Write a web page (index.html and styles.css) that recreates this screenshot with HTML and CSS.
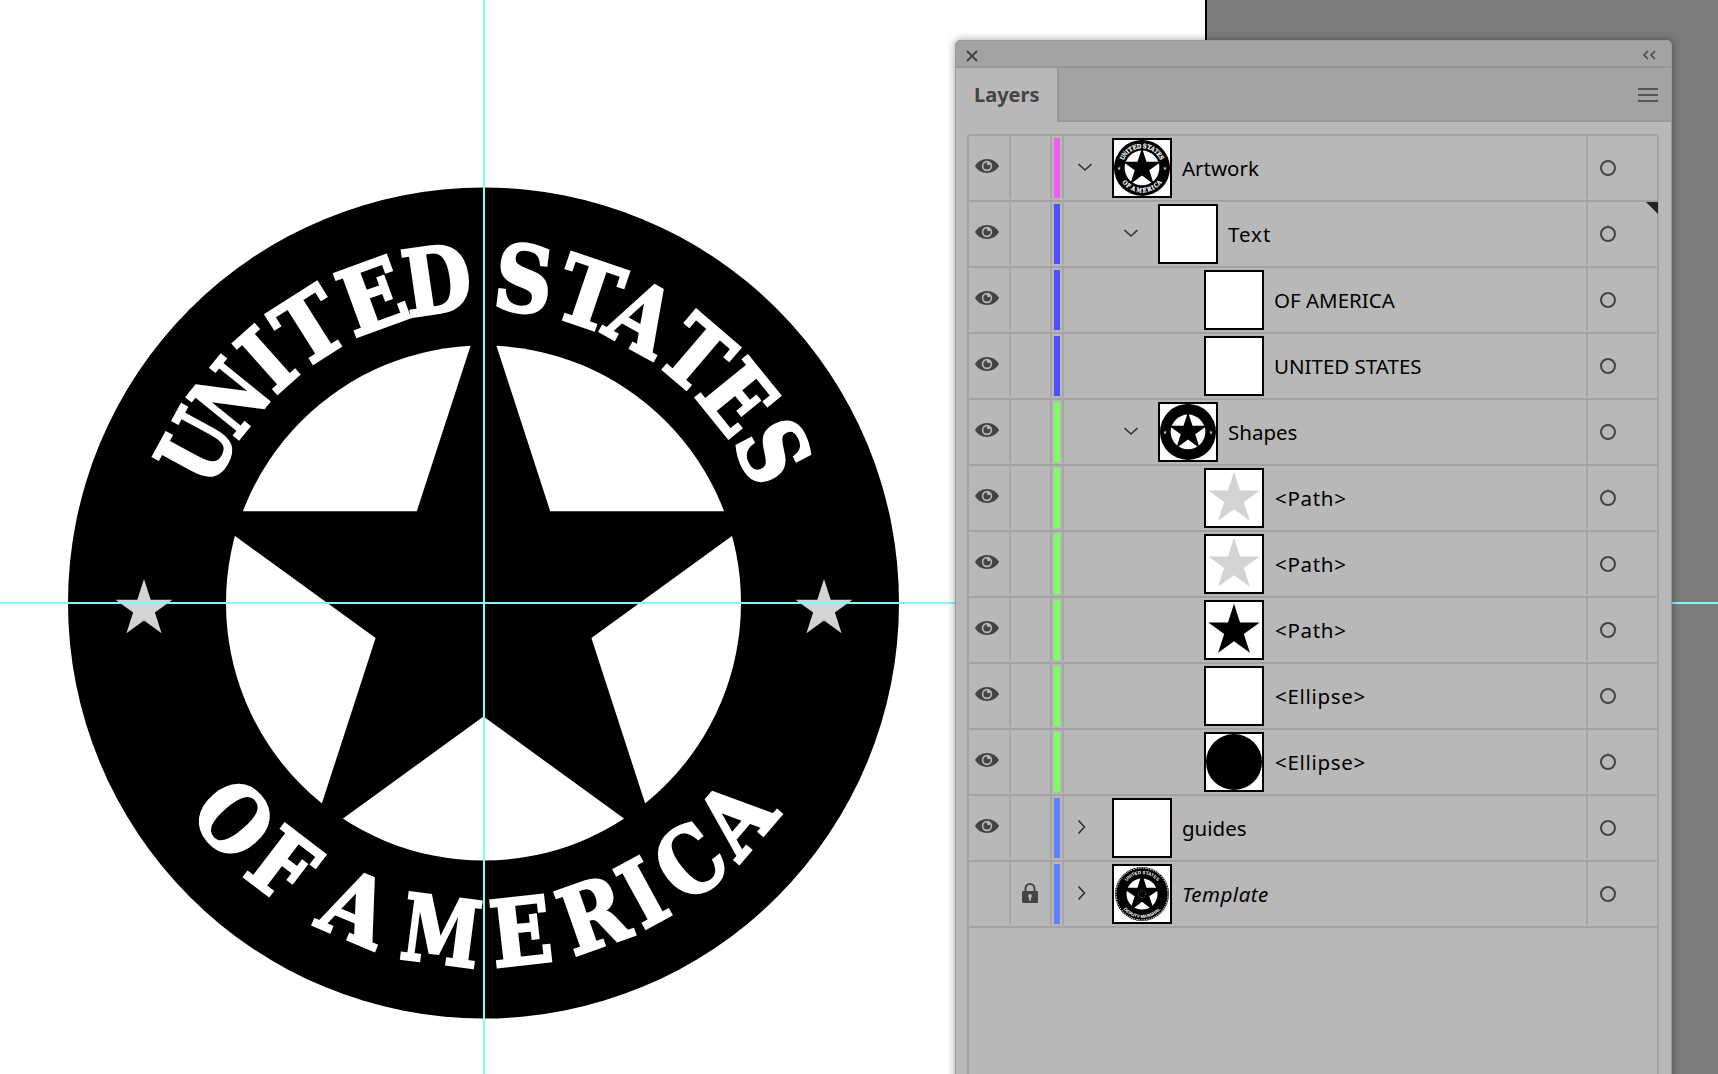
FILE: index.html
```html
<!DOCTYPE html>
<html lang="en">
<head>
<meta charset="utf-8">
<title>Layers</title>
<link rel="stylesheet" href="styles.css">
</head>
<body>
<div class="stage">
  <div class="artboard"></div>

  <svg class="art" width="1718" height="1074" viewBox="0 0 1718 1074" xmlns="http://www.w3.org/2000/svg">
    <defs>
      <polygon id="bigstar" points="483.500,306 550.200,511.200 766,511.200 591.400,638.100 658.100,843.300 483.500,716.500 308.900,843.300 375.600,638.100 201,511.200 416.800,511.200"/>
      <polygon id="smallstar" points="0,-30 6.700,-9.300 28.500,-9.300 10.900,3.500 17.600,24.300 0,11.500 -17.600,24.300 -10.900,3.500 -28.500,-9.300 -6.700,-9.300"/>
      <g id="shapes">
        <circle cx="483.500" cy="603" r="415.500" fill="#000"/>
        <circle cx="483.500" cy="603" r="257.500" fill="#fff"/>
        <use href="#bigstar" fill="#000"/>
        <use href="#smallstar" transform="translate(144 609)" fill="#d1d3d4"/>
        <use href="#smallstar" transform="translate(824 609)" fill="#d1d3d4"/>
      </g>
      <g id="lettering" class="slab">
        <text transform="rotate(-61.500 484 603) translate(484 309) scale(.8 1)">U</text>
        <text transform="rotate(-51 484 603) translate(484 309) scale(.72 1)">N</text>
        <text transform="rotate(-41.800 484 603) translate(484 309) scale(.84 1)">I</text>
        <text transform="rotate(-32.300 484 603) translate(484 309) scale(.92 1)">T</text>
        <text transform="rotate(-20 484 603) translate(484 309) scale(.92 1)">E</text>
        <text transform="rotate(-8.300 484 603) translate(484 309) scale(.86 1)">D</text>
        <text transform="rotate(7 484 603) translate(484 309) scale(.88 1)">S</text>
        <text transform="rotate(18.800 484 603) translate(484 309) scale(.92 1)">T</text>
        <text transform="rotate(29 484 603) translate(484 309) scale(.84 1)">A</text>
        <text transform="rotate(40.500 484 603) translate(484 309) scale(.88 1)">T</text>
        <text transform="rotate(51 484 603) translate(484 309) scale(.86 1)">E</text>
        <text transform="rotate(62.300 484 603) translate(484 309) scale(.84 1)">S</text>

        <text transform="rotate(49.200 484 603) translate(484 966) scale(.86 1)">O</text>
        <text transform="rotate(37.400 484 603) translate(484 966) scale(.86 1)">F</text>
        <text transform="rotate(22.800 484 603) translate(484 966) scale(.92 1)">A</text>
        <text transform="rotate(7.400 484 603) translate(484 966) scale(.78 1)">M</text>
        <text transform="rotate(-6.400 484 603) translate(484 966) scale(.88 1)">E</text>
        <text transform="rotate(-19.300 484 603) translate(484 966) scale(.86 1)">R</text>
        <text transform="rotate(-28.700 484 603) translate(484 966) scale(.84 1)">I</text>
        <text transform="rotate(-38.600 484 603) translate(484 966) scale(.84 1)">C</text>
        <text transform="rotate(-49.500 484 603) translate(484 966) scale(.9 1)">A</text>
      </g>
    </defs>
    <use href="#shapes"/>
    <use href="#lettering"/>
    <rect class="guide" x="0" y="602" width="1718" height="2"/>
    <rect class="guide" x="483" y="0" width="2" height="1074"/>
  </svg>

  <section class="panel">
    <header class="titlebar">
      <svg class="ico-close" width="12" height="12" viewBox="0 0 12 12"><path d="M1 1l10 10M11 1L1 11"/></svg>
      <svg class="ico-collapse" width="14" height="10" viewBox="0 0 14 10"><path d="M6 1L2 5l4 4M13 1L9 5l4 4"/></svg>
    </header>
    <div class="tabbar">
      <div class="tab">Layers</div>
      <div class="menu"><span></span><span></span><span></span></div>
    </div>
    <div class="body">
      <div class="list">
        <div class="corner"></div>

        <div class="row">
          <div class="c-vis"><svg class="eye"><use href="#eye"/></svg></div><div class="c-lock"></div>
          <div class="c-color"><i class="bar magenta"></i></div>
          <div class="c-name lvl1">
            <svg class="chev"><use href="#chev-down"/></svg>
            <span class="thumb"><svg viewBox="68 188 831 831"><use href="#shapes"/><use href="#lettering"/></svg></span>
            <span class="label">Artwork</span>
          </div>
          <div class="c-target"><i class="target"></i></div>
        </div>

        <div class="row">
          <div class="c-vis"><svg class="eye"><use href="#eye"/></svg></div><div class="c-lock"></div>
          <div class="c-color"><i class="bar blue"></i></div>
          <div class="c-name lvl2">
            <svg class="chev"><use href="#chev-down"/></svg>
            <span class="thumb"></span>
            <span class="label spaced-more">Text</span>
          </div>
          <div class="c-target"><i class="target"></i></div>
        </div>

        <div class="row">
          <div class="c-vis"><svg class="eye"><use href="#eye"/></svg></div><div class="c-lock"></div>
          <div class="c-color"><i class="bar blue"></i></div>
          <div class="c-name lvl3"><span class="thumb"></span><span class="label">OF AMERICA</span></div>
          <div class="c-target"><i class="target"></i></div>
        </div>

        <div class="row">
          <div class="c-vis"><svg class="eye"><use href="#eye"/></svg></div><div class="c-lock"></div>
          <div class="c-color"><i class="bar blue"></i></div>
          <div class="c-name lvl3"><span class="thumb"></span><span class="label">UNITED STATES</span></div>
          <div class="c-target"><i class="target"></i></div>
        </div>

        <div class="row">
          <div class="c-vis"><svg class="eye"><use href="#eye"/></svg></div><div class="c-lock"></div>
          <div class="c-color"><i class="bar green"></i></div>
          <div class="c-name lvl2">
            <svg class="chev"><use href="#chev-down"/></svg>
            <span class="thumb"><svg viewBox="68 188 831 831"><use href="#shapes"/></svg></span>
            <span class="label">Shapes</span>
          </div>
          <div class="c-target"><i class="target"></i></div>
        </div>

        <div class="row">
          <div class="c-vis"><svg class="eye"><use href="#eye"/></svg></div><div class="c-lock"></div>
          <div class="c-color"><i class="bar green"></i></div>
          <div class="c-name lvl3"><span class="thumb"><svg viewBox="-31 -32 62 62"><use href="#smallstar" fill="#d1d3d4"/></svg></span><span class="label tag">&lt;Path&gt;</span></div>
          <div class="c-target"><i class="target"></i></div>
        </div>

        <div class="row">
          <div class="c-vis"><svg class="eye"><use href="#eye"/></svg></div><div class="c-lock"></div>
          <div class="c-color"><i class="bar green"></i></div>
          <div class="c-name lvl3"><span class="thumb"><svg viewBox="-31 -32 62 62"><use href="#smallstar" fill="#d1d3d4"/></svg></span><span class="label tag">&lt;Path&gt;</span></div>
          <div class="c-target"><i class="target"></i></div>
        </div>

        <div class="row">
          <div class="c-vis"><svg class="eye"><use href="#eye"/></svg></div><div class="c-lock"></div>
          <div class="c-color"><i class="bar green"></i></div>
          <div class="c-name lvl3"><span class="thumb"><svg viewBox="-31 -32 62 62"><use href="#smallstar" fill="#000"/></svg></span><span class="label tag">&lt;Path&gt;</span></div>
          <div class="c-target"><i class="target"></i></div>
        </div>

        <div class="row">
          <div class="c-vis"><svg class="eye"><use href="#eye"/></svg></div><div class="c-lock"></div>
          <div class="c-color"><i class="bar green"></i></div>
          <div class="c-name lvl3"><span class="thumb"></span><span class="label tag">&lt;Ellipse&gt;</span></div>
          <div class="c-target"><i class="target"></i></div>
        </div>

        <div class="row">
          <div class="c-vis"><svg class="eye"><use href="#eye"/></svg></div><div class="c-lock"></div>
          <div class="c-color"><i class="bar green"></i></div>
          <div class="c-name lvl3"><span class="thumb"><svg viewBox="0 0 56 56"><circle cx="28" cy="28" r="28"/></svg></span><span class="label tag">&lt;Ellipse&gt;</span></div>
          <div class="c-target"><i class="target"></i></div>
        </div>

        <div class="row">
          <div class="c-vis"><svg class="eye"><use href="#eye"/></svg></div><div class="c-lock"></div>
          <div class="c-color"><i class="bar periwinkle"></i></div>
          <div class="c-name lvl1">
            <svg class="chev"><use href="#chev-right"/></svg>
            <span class="thumb"></span>
            <span class="label">guides</span>
          </div>
          <div class="c-target"><i class="target"></i></div>
        </div>

        <div class="row">
          <div class="c-vis"></div>
          <div class="c-lock"><svg class="lock" width="16" height="20" viewBox="0 0 16 20"><path d="M3.500 8.500V5.500a4.500 4.500 0 0 1 9 0v3" fill="none" stroke="#444" stroke-width="2"/><path fill-rule="evenodd" d="M1 8h14a1 1 0 0 1 1 1v10a1 1 0 0 1-1 1H1a1 1 0 0 1-1-1V9a1 1 0 0 1 1-1zM8 11a2 2 0 0 0-1 3.700L7 17.500h2v-2.800A2 2 0 0 0 8 11z" fill="#444"/></svg></div>
          <div class="c-color"><i class="bar periwinkle"></i></div>
          <div class="c-name lvl1">
            <svg class="chev"><use href="#chev-right"/></svg>
            <span class="thumb"><svg viewBox="0 0 56 56">
              <circle cx="28" cy="28" r="27" fill="#000"/>
              <circle cx="28" cy="28" r="26" fill="none" stroke="#fff" stroke-width="1" stroke-dasharray="1.500 1"/>
              <circle cx="28" cy="28" r="15.500" fill="#fff"/>
              <polygon points="28,7 32.500,21.800 48,21.800 35.300,30.300 40.300,45.200 28,35.700 15.700,45.200 20.700,30.300 8,21.800 23.500,21.800" fill="#000"/>
              <circle cx="28" cy="28" r="3.500" fill="none" stroke="#888" stroke-width=".7" stroke-dasharray="1 1"/>
              <path id="tplarc" d="M8 28a20 20 0 0 1 40 0" fill="none"/>
              <path id="tplarc2" d="M4 28a24 24 0 0 0 48 0" fill="none"/>
              <text class="tiny"><textPath href="#tplarc" startOffset="50%">UNITED STATES</textPath></text>
              <text class="tiny"><textPath href="#tplarc2" startOffset="50%">DEPUTY MARSHAL</textPath></text>
            </svg></span>
            <span class="label italic">Template</span>
          </div>
          <div class="c-target"><i class="target"></i></div>
        </div>
      </div>
    </div>
  </section>

  <svg class="iconset" width="0" height="0" xmlns="http://www.w3.org/2000/svg">
    <defs>
      <symbol id="eye" viewBox="0 0 24 14">
        <path fill="#444" fill-rule="evenodd" d="M12 0C6.500 0 2.200 3.200 0 7c2.200 3.800 6.500 7 12 7s9.800-3.200 12-7c-2.200-3.800-6.500-7-12-7zM12 1.800a5.200 5.200 0 1 1 0 10.400 5.200 5.200 0 0 1 0-10.400z"/>
        <path fill="#444" d="M12 3.400a3.600 3.600 0 1 0 3.600 3.600c0-.6-.2-1.200-.4-1.700-.3.500-.8.900-1.500.9a1.800 1.800 0 0 1-1.800-1.800c0-.3.100-.7.300-1z"/>
      </symbol>
      <symbol id="chev-down" viewBox="0 0 14 14"><path d="M0.500 4l6.500 6 6.500-6" fill="none" stroke="#333" stroke-width="1.600"/></symbol>
      <symbol id="chev-right" viewBox="0 0 14 14"><path d="M0.500 0.500l6 6.500-6 6.500" fill="none" stroke="#333" stroke-width="1.600"/></symbol>
    </defs>
  </svg>
</div>
</body>
</html>
```
FILE: styles.css
```css
* { box-sizing: border-box; }
html, body { margin: 0; padding: 0; }
body { font-family: "Noto Sans", "Open Sans", sans-serif; }

.stage {
  position: relative;
  width: 1718px;
  height: 1074px;
  overflow: hidden;
  background: #7c7c7c;
}
.artboard {
  width: 1207px;
  height: 100%;
  background: #fff;
  border-right: 2px solid #000;
}
.art { position: absolute; left: 0; top: 0; }
.iconset { position: absolute; }
.guide { fill: #7ffbfb; }

.slab {
  font-family: "DejaVu Serif", serif;
  font-weight: 700;
  font-size: 91px;
  text-anchor: middle;
  fill: #fff;
  stroke: #fff;
  stroke-width: 3px;
  stroke-linejoin: miter;
}
.tiny {
  font-family: "Liberation Sans", sans-serif;
  font-size: 4.500px;
  font-weight: 700;
  text-anchor: middle;
  fill: #fff;
}

.panel {
  position: absolute;
  left: 955px;
  top: 40px;
  width: 717px;
  height: 1060px;
  display: flex;
  flex-direction: column;
  background: #b8b8b8;
  border: 1px solid #9a9a9a;
  border-radius: 5px 5px 0 0;
  box-shadow: 0 0 9px rgba(0, 0, 0, .38);
}
.titlebar {
  height: 27px;
  flex: none;
  display: flex;
  align-items: center;
  justify-content: space-between;
  padding: 3px 15px 0 10px;
  background: #a3a3a3;
  border-bottom: 2px solid #979797;
  border-radius: 4px 4px 0 0;
}
.ico-close { margin-top: 2px; }
.ico-close path { fill: none; stroke: #444; stroke-width: 2; }
.ico-collapse path { fill: none; stroke: #444; stroke-width: 1.500; }

.tabbar {
  height: 54px;
  flex: none;
  display: flex;
  align-items: stretch;
  justify-content: space-between;
  background: #a3a3a3;
}
.tab {
  width: 103px;
  display: flex;
  align-items: center;
  padding: 0 0 2px 18px;
  background: #b8b8b8;
  border-right: 2px solid #979797;
  font-size: 20px;
  font-weight: 700;
  color: #444;
}
.menu {
  flex: 1;
  display: flex;
  flex-direction: column;
  align-items: flex-end;
  justify-content: center;
  gap: 4px;
  padding: 2px 13px 0 0;
  border-bottom: 2px solid #979797;
}
.menu span { display: block; width: 20px; height: 2px; background: #555; }

.body { flex: 1; padding: 12px 12px 0 11px; }
.list {
  position: relative;
  height: 100%;
  border: 2px solid #a3a3a3;
  border-bottom: 0;
  border-radius: 4px 4px 0 0;
}
.corner {
  position: absolute;
  right: -1px;
  top: 66px;
  width: 12px;
  height: 12px;
  background: #222;
  clip-path: polygon(0 0, 100% 0, 100% 100%);
}

.row {
  display: flex;
  height: 66px;
  border-bottom: 2px solid #a3a3a3;
}
.c-vis, .c-lock {
  flex: none;
  display: flex;
  align-items: center;
  justify-content: center;
  border-right: 2px solid #a6a6a6;
  margin-bottom: 1px;
}
.c-vis { width: 42px; padding-right: 4px; }
.c-lock { width: 41px; }
.eye { width: 24px; height: 14px; margin-top: -4px; }
.lock { margin-top: -2px; margin-right: 1px; }

.c-color {
  flex: none;
  width: 12px;
  padding: 2px 2px 0 2px;
  border-right: 2px solid #a6a6a6;
  margin-bottom: 1px;
}
.bar { display: block; width: 6px; height: 60px; }
.magenta { background: #ef5df0; }
.blue { background: #4f4fff; }
.green { background: #7fff5f; }
.periwinkle { background: #5f80ff; }

.c-name {
  flex: 1;
  display: flex;
  align-items: flex-start;
  padding-top: 2px;
}
.lvl1 { padding-left: 14px; }
.lvl2 { padding-left: 60px; }
.lvl3 { padding-left: 140px; }
.chev { width: 14px; height: 14px; flex: none; margin: 22px 20px 0 0; }

.thumb {
  flex: none;
  display: block;
  width: 60px;
  height: 60px;
  background: #fff;
  border: 2px solid #000;
}
.thumb svg { display: block; width: 56px; height: 56px; }
.label {
  margin-left: 10px;
  height: 60px;
  line-height: 60px;
  font-size: 20.500px;
  color: #000;
  white-space: nowrap;
}
.tag { letter-spacing: .7px; margin-left: 11px; }
.spaced-more { letter-spacing: 1px; }
.italic { font-style: italic; letter-spacing: .5px; }

.c-target {
  flex: none;
  width: 71px;
  display: flex;
  align-items: center;
  padding-left: 12px;
  border-left: 2px solid #a6a6a6;
  margin-bottom: 1px;
}
.target {
  display: block;
  width: 16px;
  height: 16px;
  border: 2px solid #444;
  border-radius: 50%;
}
```
